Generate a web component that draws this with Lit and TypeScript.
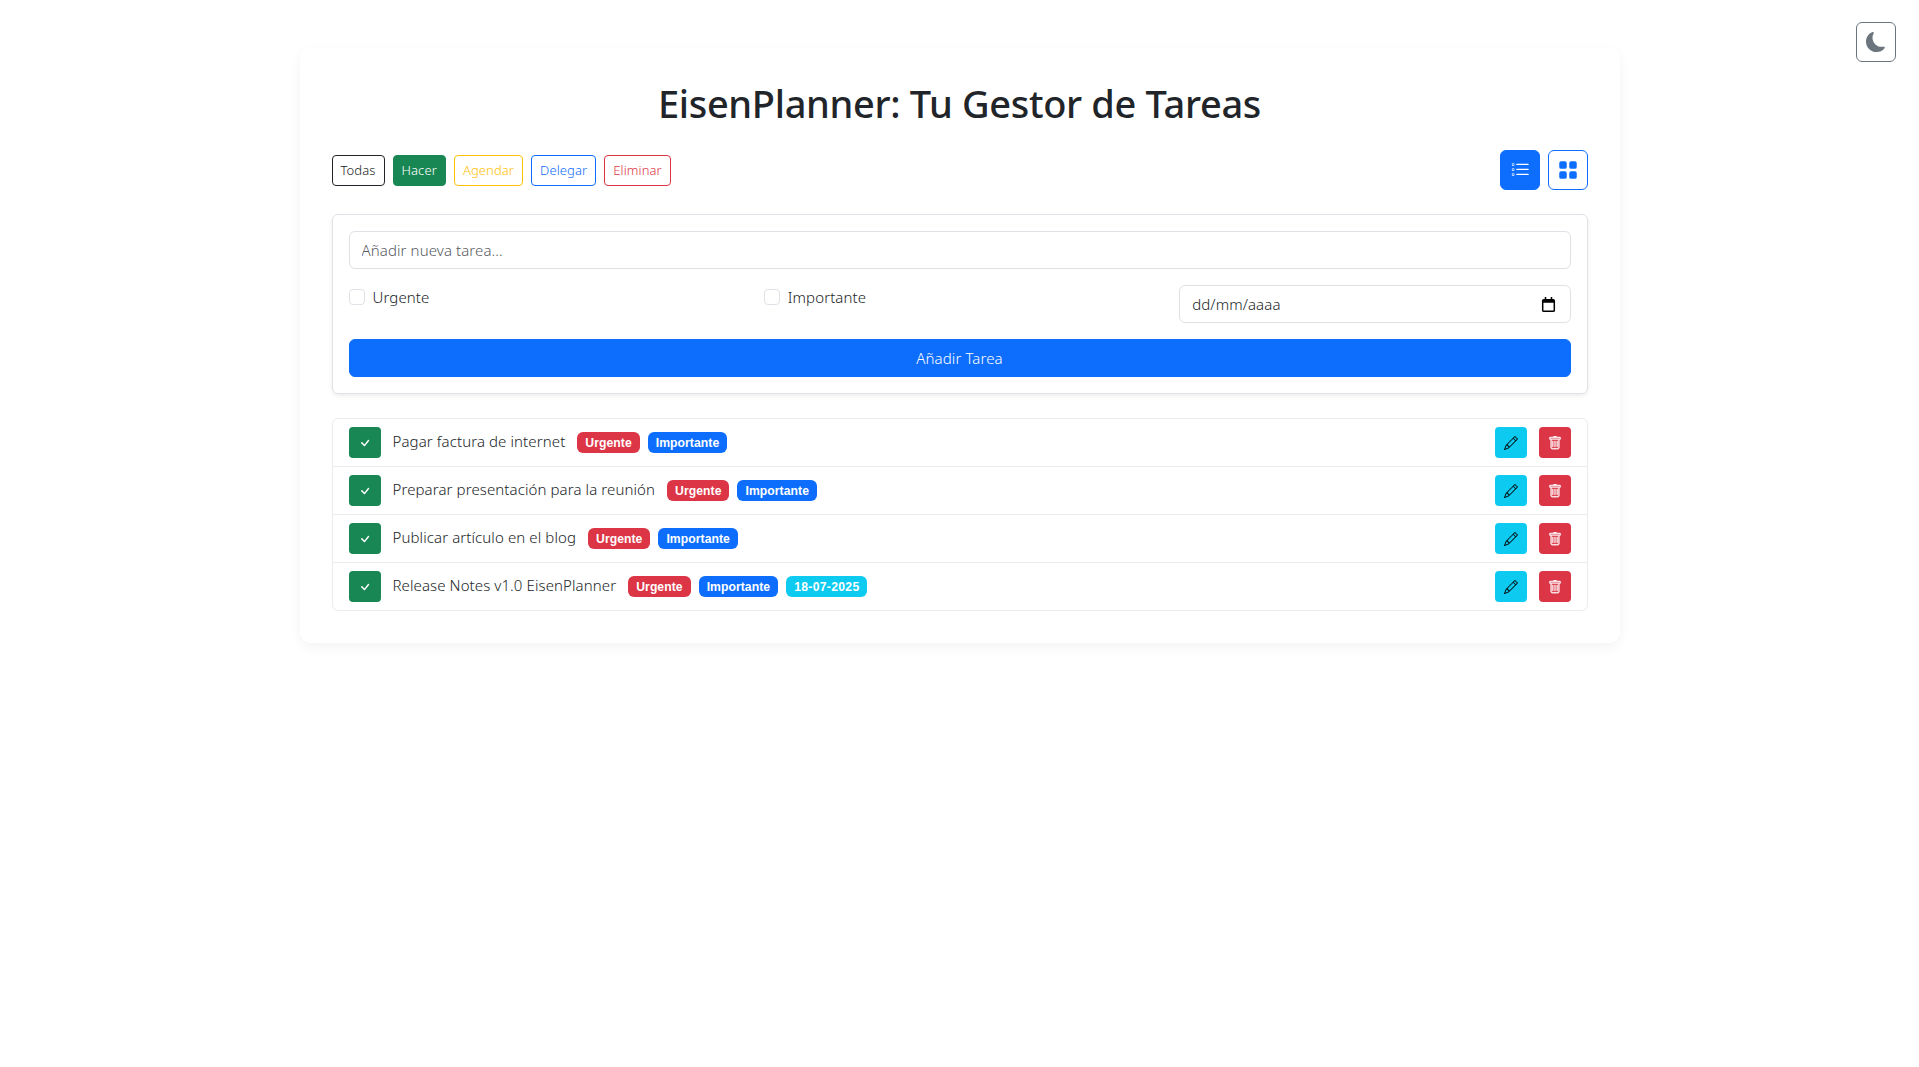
import { LitElement, html, css, svg } from "lit";
import { customElement } from "lit/decorators.js";

const icon = (paths: unknown, size = 16) =>
  html`<svg width=${size} height=${size} viewBox="0 0 16 16" fill="currentColor">${paths}</svg>`;

const moon = svg`<path d="M6 .278a.77.77 0 0 1 .08.858 7.2 7.2 0 0 0-.878 3.46c0 4.021 3.278 7.277 7.318 7.277q.792-.001 1.533-.16a.79.79 0 0 1 .81.316.73.73 0 0 1-.031.893A8.35 8.35 0 0 1 8.344 16C3.734 16 0 12.286 0 7.71 0 4.266 2.114 1.312 5.124.06A.75.75 0 0 1 6 .278"/>`;
const listTask = svg`<path fill-rule="evenodd" d="M2 2.5a.5.5 0 0 0-.5.5v1a.5.5 0 0 0 .5.5h1a.5.5 0 0 0 .5-.5V3a.5.5 0 0 0-.5-.5zM3 3H2v1h1z"/><path d="M5 3.5a.5.5 0 0 1 .5-.5h9a.5.5 0 0 1 0 1h-9a.5.5 0 0 1-.5-.5M5.5 7a.5.5 0 0 0 0 1h9a.5.5 0 0 0 0-1zm0 4a.5.5 0 0 0 0 1h9a.5.5 0 0 0 0-1z"/><path fill-rule="evenodd" d="M1.5 7a.5.5 0 0 1 .5-.5h1a.5.5 0 0 1 .5.5v1a.5.5 0 0 1-.5.5H2a.5.5 0 0 1-.5-.5zM2 7h1v1H2zm0 3.5a.5.5 0 0 0-.5.5v1a.5.5 0 0 0 .5.5h1a.5.5 0 0 0 .5-.5v-1a.5.5 0 0 0-.5-.5zm1 .5H2v1h1z"/>`;
const gridFill = svg`<path d="M1 2.5A1.5 1.5 0 0 1 2.5 1h3A1.5 1.5 0 0 1 7 2.5v3A1.5 1.5 0 0 1 5.5 7h-3A1.5 1.5 0 0 1 1 5.5zm8 0A1.5 1.5 0 0 1 10.5 1h3A1.5 1.5 0 0 1 15 2.5v3A1.5 1.5 0 0 1 13.5 7h-3A1.5 1.5 0 0 1 9 5.5zm-8 8A1.5 1.5 0 0 1 2.5 9h3A1.5 1.5 0 0 1 7 10.5v3A1.5 1.5 0 0 1 5.5 15h-3A1.5 1.5 0 0 1 1 13.5zm8 0A1.5 1.5 0 0 1 10.5 9h3a1.5 1.5 0 0 1 1.5 1.5v3a1.5 1.5 0 0 1-1.5 1.5h-3A1.5 1.5 0 0 1 9 13.5z"/>`;
const check = svg`<path d="M10.97 4.97a.75.75 0 0 1 1.07 1.05l-3.99 4.99a.75.75 0 0 1-1.08.02L4.324 8.384a.75.75 0 1 1 1.06-1.06l2.094 2.093 3.473-4.425z"/>`;
const pencil = svg`<path d="M12.146.146a.5.5 0 0 1 .708 0l3 3a.5.5 0 0 1 0 .708l-10 10a.5.5 0 0 1-.168.11l-5 2a.5.5 0 0 1-.65-.65l2-5a.5.5 0 0 1 .11-.168zM11.207 2.5 13.5 4.793 14.793 3.5 12.5 1.207zm1.586 3L10.5 3.207 4 9.707V10h.5a.5.5 0 0 1 .5.5v.5h.5a.5.5 0 0 1 .5.5v.5h.293zm-9.761 5.175-.106.106-1.528 3.821 3.821-1.528.106-.106A.5.5 0 0 1 5 12.5V12h-.5a.5.5 0 0 1-.5-.5V11h-.5a.5.5 0 0 1-.468-.325"/>`;
const trash = svg`<path d="M5.5 5.5A.5.5 0 0 1 6 6v6a.5.5 0 0 1-1 0V6a.5.5 0 0 1 .5-.5m2.5 0a.5.5 0 0 1 .5.5v6a.5.5 0 0 1-1 0V6a.5.5 0 0 1 .5-.5m3 .5a.5.5 0 0 0-1 0v6a.5.5 0 0 0 1 0z"/><path d="M14.5 3a1 1 0 0 1-1 1H13v9a2 2 0 0 1-2 2H5a2 2 0 0 1-2-2V4h-.5a1 1 0 0 1-1-1V2a1 1 0 0 1 1-1H6a1 1 0 0 1 1-1h2a1 1 0 0 1 1 1h3.5a1 1 0 0 1 1 1zM4.118 4 4 4.059V13a1 1 0 0 0 1 1h6a1 1 0 0 0 1-1V4.059L11.882 4zM2.5 3h11V2h-11z"/>`;
const calendar = svg`<path fill-rule="evenodd" d="M4 0h1.6v2h4.8V0H12v2h1a2 2 0 0 1 2 2v10a2 2 0 0 1-2 2H3a2 2 0 0 1-2-2V4a2 2 0 0 1 2-2h1zM2.6 6v8c0 .2.2.4.4.4h10c.2 0 .4-.2.4-.4V6z"/>`;

const filters = [
  { label: "Todas", cls: "dark" },
  { label: "Hacer", cls: "success" },
  { label: "Agendar", cls: "warning" },
  { label: "Delegar", cls: "primary" },
  { label: "Eliminar", cls: "danger" },
];

const tasks = [
  { title: "Pagar factura de internet" },
  { title: "Preparar presentación para la reunión" },
  { title: "Publicar artículo en el blog" },
  { title: "Release Notes v1.0 EisenPlanner", date: "18-07-2025" },
];

@customElement("app-root")
export class AppRoot extends LitElement {
  static styles = css`
    :host {
      display: block;
      min-height: 1067px;
      background: #fff;
      color: #212529;
      font-family: "Noto Sans", sans-serif;
      font-size: 15px;
      font-weight: 300;
      letter-spacing: 0.1px;
      box-sizing: border-box;
      padding-top: 48px;
    }
    * {
      box-sizing: border-box;
    }
    button {
      font: inherit;
      letter-spacing: inherit;
      cursor: pointer;
    }
    .theme-toggle {
      position: absolute;
      top: 22px;
      right: 23px;
      width: 40px;
      height: 40px;
      display: flex;
      align-items: center;
      justify-content: center;
      background: #fff;
      border: 1px solid #6c757d;
      border-radius: 6px;
      color: #6c757d;
      padding: 0;
    }
    .main {
      width: 1320px;
      margin: 0 auto;
      padding: 32px;
      height: 595px;
      border-radius: 10px;
      background: #fff;
      box-shadow: 0 4px 12px rgba(0, 0, 0, 0.05);
    }
    h1 {
      margin: -1px 0 23px;
      height: 48px;
      line-height: 48px;
      text-align: center;
      font-size: 38px;
      font-weight: 500;
      letter-spacing: -0.33px;
    }
    .toolbar {
      display: flex;
      justify-content: space-between;
      align-items: center;
      margin-bottom: 24px;
    }
    .filters {
      display: flex;
      gap: 8px;
    }
    .filter {
      height: 31px;
      padding: 0 8px;
      font-size: 13px;
      letter-spacing: 0.1px;
      background: #fff;
      border: 1px solid currentColor;
      border-radius: 4px;
    }
    .filter.dark {
      color: #212529;
    }
    .filter.success {
      color: #fff;
      background: #198754;
      border-color: #198754;
    }
    .filter.warning {
      color: #ffc107;
    }
    .filter.primary {
      color: #0d6efd;
    }
    .filter.danger {
      color: #dc3545;
    }
    .views {
      display: flex;
      gap: 8px;
    }
    .view {
      width: 40px;
      height: 40px;
      padding: 0;
      display: flex;
      align-items: center;
      justify-content: center;
      border: 1px solid #0d6efd;
      border-radius: 6px;
      color: #0d6efd;
      background: #fff;
    }
    .view.active {
      color: #fff;
      background: #0d6efd;
    }
    .form-card {
      padding: 16px;
      border: 1px solid #dee2e6;
      border-radius: 6px;
      box-shadow: 0 2px 4px rgba(0, 0, 0, 0.075);
      margin-bottom: 24px;
    }
    .field {
      display: flex;
      align-items: center;
      justify-content: space-between;
      width: 100%;
      height: 38px;
      padding: 0 12px;
      border: 1px solid #dee2e6;
      border-radius: 6px;
      background: #fff;
      font: inherit;
      letter-spacing: inherit;
      color: #212529;
      outline: none;
    }
    .field::placeholder {
      color: #595c5f;
      opacity: 1;
    }
    .date-field svg {
      color: #000;
      margin-right: 2px;
    }
    .options {
      display: grid;
      grid-template-columns: repeat(3, 1fr);
      gap: 24px;
      margin: 16px 0;
      height: 38px;
    }
    label.option {
      display: flex;
      align-items: flex-start;
      gap: 8px;
      line-height: 20px;
      padding-top: 2px;
    }
    .box {
      width: 16px;
      height: 16px;
      margin: 1.5px 0 0;
      appearance: none;
      border: 1px solid #dee2e6;
      border-radius: 4px;
      background: #fff;
    }
    .add {
      display: block;
      width: 100%;
      height: 38px;
      border: 1px solid #0d6efd;
      border-radius: 6px;
      background: #0d6efd;
      color: #fff;
    }
    .list {
      border: 1px solid #e9ecef;
      border-radius: 6px;
    }
    .row {
      display: flex;
      align-items: center;
      height: 48px;
      padding: 0 16px;
      border-bottom: 1px solid #e9ecef;
    }
    .row:last-child {
      border-bottom: 0;
      height: 47px;
    }
    .done {
      width: 32px;
      height: 31px;
      padding: 0;
      display: flex;
      align-items: center;
      justify-content: center;
      margin-right: 12px;
      border: 0;
      border-radius: 4px;
      background: #198754;
      color: #fff;
    }
    .title {
      margin-right: 12px;
      margin-top: -3px;
    }
    .badge {
      height: 21px;
      line-height: 22px;
      padding: 0 8px;
      margin-right: 8px;
      border-radius: 6px;
      color: #fff;
      font-family: "Liberation Sans", sans-serif;
      font-size: 12.2px;
      font-weight: 700;
      letter-spacing: 0.05px;
    }
    .badge.urgent {
      background: #dc3545;
    }
    .badge.important {
      background: #0d6efd;
    }
    .badge.date {
      background: #0dcaf0;
      letter-spacing: 0.3px;
    }
    .actions {
      display: flex;
      gap: 12px;
      margin-left: auto;
    }
    .action {
      width: 32px;
      height: 31px;
      padding: 0;
      display: flex;
      align-items: center;
      justify-content: center;
      border: 0;
      border-radius: 4px;
    }
    .action.edit {
      background: #0dcaf0;
      color: #000;
    }
    .action.remove {
      background: #dc3545;
      color: #fff;
    }
    .action.remove svg {
      stroke: currentColor;
      stroke-width: 0.4;
    }
  `;

  render() {
    return html`
      <button class="theme-toggle">${icon(moon, 20)}</button>
      <div class="main">
        <h1>EisenPlanner: Tu Gestor de Tareas</h1>
        <div class="toolbar">
          <div class="filters">
            ${filters.map((f) => html`<button class="filter ${f.cls}">${f.label}</button>`)}
          </div>
          <div class="views">
            <button class="view active">${icon(listTask, 20)}</button>
            <button class="view">${icon(gridFill, 20)}</button>
          </div>
        </div>
        <div class="form-card">
          <input class="field" type="text" placeholder="Añadir nueva tarea..." />
          <div class="options">
            <label class="option"><input class="box" type="checkbox" />Urgente</label>
            <label class="option"><input class="box" type="checkbox" />Importante</label>
            <div class="field date-field"><span>dd/mm/aaaa</span>${icon(calendar, 15)}</div>
          </div>
          <button class="add">Añadir Tarea</button>
        </div>
        <div class="list">
          ${tasks.map(
            (t) => html`
              <div class="row">
                <button class="done">${icon(check, 16)}</button>
                <span class="title">${t.title}</span>
                <span class="badge urgent">Urgente</span>
                <span class="badge important">Importante</span>
                ${t.date ? html`<span class="badge date">${t.date}</span>` : ""}
                <div class="actions">
                  <button class="action edit">${icon(pencil, 14)}</button>
                  <button class="action remove">${icon(trash, 14)}</button>
                </div>
              </div>
            `
          )}
        </div>
      </div>
    `;
  }
}
